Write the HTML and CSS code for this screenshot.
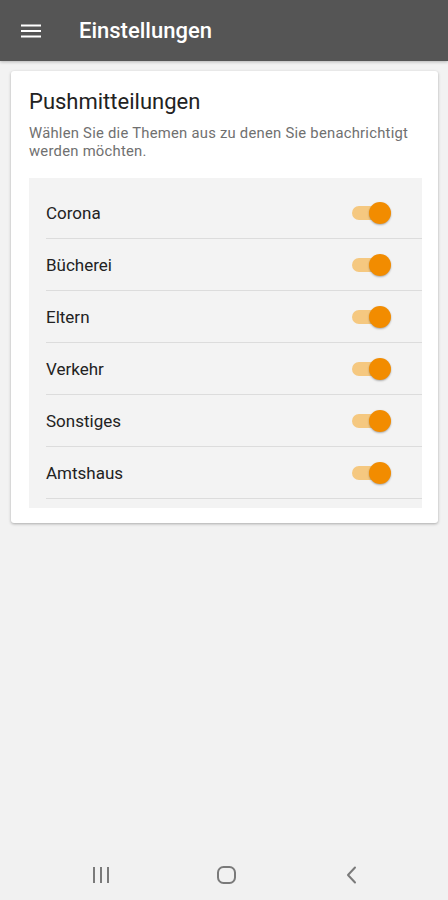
FILE: index.html
```html
<!DOCTYPE html>
<html lang="de">
<head>
    <meta charset="UTF-8">
    <meta name="viewport" content="width=device-width, initial-scale=1.0">
    <title>Einstellungen</title>
    <link rel="stylesheet" href="styles.css">
</head>
<body>
    <header class="toolbar">
        <button class="menu-button" aria-label="Menü">
            <svg width="20" height="14" viewBox="0 0 20 14">
                <rect x="0" y="0.5" width="20" height="2" fill="#fff"/>
                <rect x="0" y="6" width="20" height="2" fill="#fff"/>
                <rect x="0" y="11.5" width="20" height="2" fill="#fff"/>
            </svg>
        </button>
        <h1 class="toolbar-title">Einstellungen</h1>
    </header>

    <main class="content">
        <section class="card">
            <h2 class="card-title">Pushmitteilungen</h2>
            <p class="card-text">Wählen Sie die Themen aus zu denen Sie benachrichtigt werden möchten.</p>

            <div class="topic-list">
                <label class="topic">
                    <span class="topic-name">Corona</span>
                    <input type="checkbox" class="toggle" checked>
                </label>
                <label class="topic">
                    <span class="topic-name">Bücherei</span>
                    <input type="checkbox" class="toggle" checked>
                </label>
                <label class="topic">
                    <span class="topic-name">Eltern</span>
                    <input type="checkbox" class="toggle" checked>
                </label>
                <label class="topic">
                    <span class="topic-name">Verkehr</span>
                    <input type="checkbox" class="toggle" checked>
                </label>
                <label class="topic">
                    <span class="topic-name">Sonstiges</span>
                    <input type="checkbox" class="toggle" checked>
                </label>
                <label class="topic">
                    <span class="topic-name">Amtshaus</span>
                    <input type="checkbox" class="toggle" checked>
                </label>
            </div>
        </section>
    </main>

    <nav class="navbar">
        <div class="nav-item">
            <svg width="18" height="16" viewBox="0 0 18 16">
                <rect x="1" y="0" width="2" height="16" fill="#7a7a7a"/>
                <rect x="8" y="0" width="2" height="16" fill="#7a7a7a"/>
                <rect x="15" y="0" width="2" height="16" fill="#7a7a7a"/>
            </svg>
        </div>
        <div class="nav-item">
            <svg width="19" height="18" viewBox="0 0 19 18">
                <rect x="1" y="1" width="17" height="16" rx="5.5" fill="none" stroke="#7a7a7a" stroke-width="2"/>
            </svg>
        </div>
        <div class="nav-item">
            <svg width="12" height="18" viewBox="0 0 12 18">
                <path d="M10 1.5 L3 9 L10 16.5" fill="none" stroke="#7a7a7a" stroke-width="2" stroke-linecap="round" stroke-linejoin="round"/>
            </svg>
        </div>
    </nav>
</body>
</html>
```

FILE: styles.css
```css
body {
    margin: 0;
    height: 100vh;
    display: flex;
    flex-direction: column;
    background-color: #f2f2f2;
    font-family: Roboto, "Liberation Sans", Arial, sans-serif;
}
.toolbar {
    height: 61px;
    flex-shrink: 0;
    display: flex;
    align-items: center;
    background-color: #555555;
    box-shadow: 0 1px 3px rgba(0, 0, 0, 0.25);
}
.menu-button {
    width: 79px;
    height: 61px;
    padding: 0 0 0 21px;
    margin: 0;
    border: none;
    background: none;
    display: flex;
    align-items: center;
    justify-content: flex-start;
}
.toolbar-title {
    margin: 0;
    color: #fff;
    font-size: 22px;
    font-weight: 500;
}
.content {
    flex: 1;
    padding: 10px 10px 0 11px;
}
.card {
    background-color: #fff;
    border-radius: 3px;
    padding: 17px 16px 15px 18px;
    box-shadow: 0 1px 3px rgba(0, 0, 0, 0.3);
}
.card-title {
    margin: 0;
    font-size: 22px;
    font-weight: 400;
    line-height: 28px;
    color: #222;
}
.card-text {
    margin: 8px 0 18px 0;
    font-size: 14.8px;
    line-height: 18px;
    letter-spacing: 0.25px;
    color: #707070;
}
.topic-list {
    background-color: #f3f3f3;
    padding: 9px 0 9px 17px;
}
.topic {
    box-sizing: border-box;
    height: 52px;
    display: flex;
    align-items: center;
    justify-content: space-between;
    border-bottom: 1px solid #dcdcdc;
    padding-right: 34px;
}
.topic-name {
    font-size: 17px;
    color: #222;
}
.toggle {
    appearance: none;
    margin: 0;
    position: relative;
    width: 36px;
    height: 14px;
    border-radius: 7px;
    background-color: #f5c880;
}
.toggle::after {
    content: "";
    position: absolute;
    right: -3px;
    top: -4px;
    width: 22px;
    height: 22px;
    border-radius: 50%;
    background-color: #f28c00;
    box-shadow: 0 1px 2px rgba(0, 0, 0, 0.3);
}
.navbar {
    height: 50px;
    flex-shrink: 0;
    display: flex;
    justify-content: center;
    align-items: center;
    padding-left: 4px;
    background-color: #f1f1f1;
}
.nav-item {
    width: 125px;
    display: flex;
    justify-content: center;
}
```
